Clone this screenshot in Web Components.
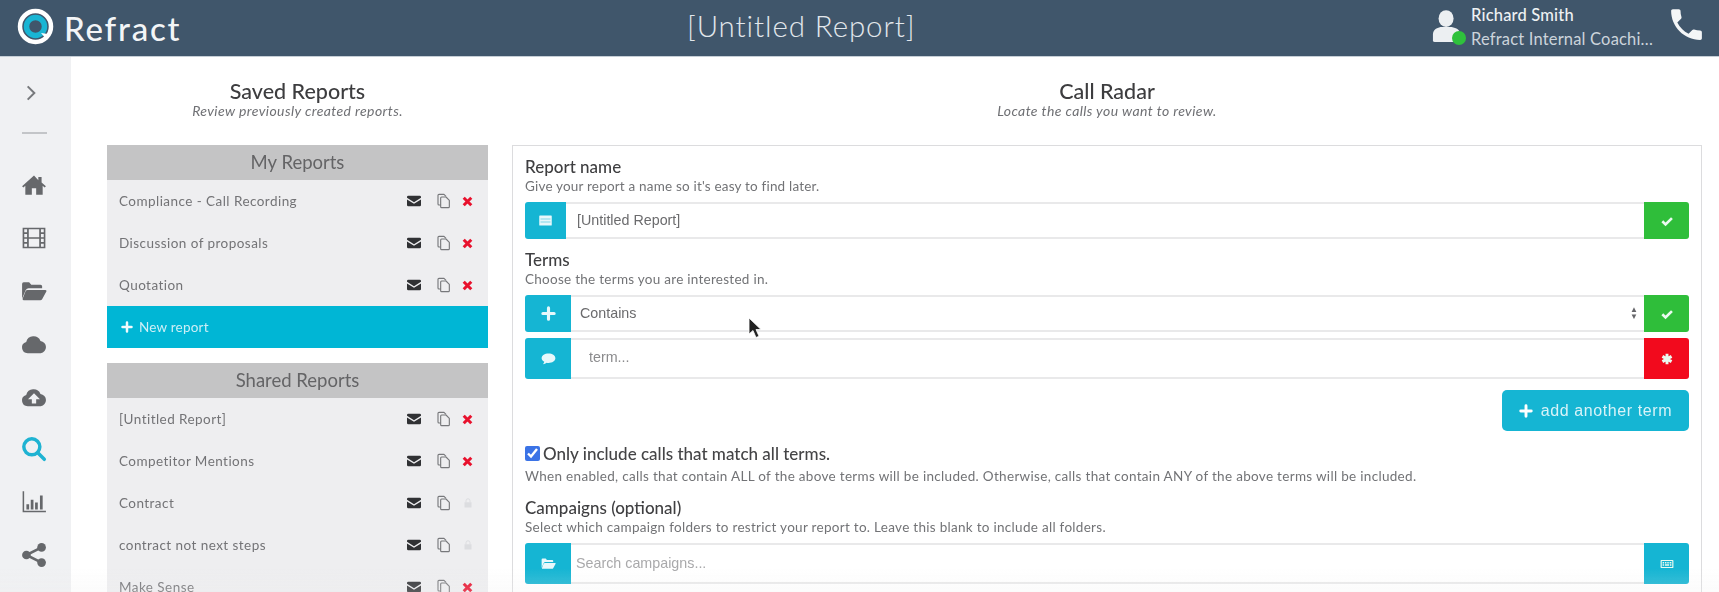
<!DOCTYPE html>
<html lang="en"><head><meta charset="utf-8"><title>Refract</title>
<style>
html,body{margin:0;height:592px;overflow:hidden;background:#fff}
body{font-family:Lato,"Open Sans",sans-serif;color:#444}
</style></head><body>
<refract-app></refract-app>
<script>
const ICONS={
home:'<path d="M12 3.2 1 13.2l1.2 1.2L4 12.8V21h6v-6h4v6h6v-8.2l1.8 1.6 1.2-1.2-4-3.6V4.5h-3v3z"/>',
film:'<path fill-rule="evenodd" d="M1.5 2.5h21v19h-21zM3 4v2.6h2.6V4zm0 4.2v3h2.6v-3zm0 4.6v3h2.6v-3zm0 4.6V20h2.6v-2.6zM7.2 4v7.2h9.6V4zm0 8.8V20h9.6v-7.2zM18.4 4v2.6H21V4zm0 4.2v3H21v-3zm0 4.6v3H21v-3zm0 4.6V20H21v-2.6z"/>',
folder:'<path d="M1 19V5.5A1.5 1.5 0 0 1 2.500 4h5l2 2.200H18A1.500 1.500 0 0 1 19.500 7.700V9.500H7a3 3 0 0 0-2.600 1.500z"/><path d="M6 11h16.500c.9 0 1.300.8.900 1.500L19.500 19.500a2 2 0 0 1-1.700 1H2.500c-.9 0-1.300-.8-.9-1.500L4.300 12a2 2 0 0 1 1.700-1z"/>',
cloud:'<path d="M6.300 20.500A5.300 5.300 0 0 1 4.800 10.100 7 7 0 0 1 18 9.200a5.700 5.700 0 0 1 .2 11.300z"/>',
upload:'<path fill-rule="evenodd" d="M6.300 20.500A5.300 5.300 0 0 1 4.800 10.100 7 7 0 0 1 18 9.200a5.700 5.700 0 0 1 .2 11.300zM12 8.500l-5.500 5.500h3.500v4h4v-4h3.500z"/>',
search:'<g fill="none" stroke="currentColor" stroke-width="3.200" stroke-linecap="round"><circle cx="10" cy="10" r="7.400"/><path d="M15.500 15.500l6 6"/></g>',
bars:'<path d="M1.500 2h1.400v18H23v1.500H1.500z"/><path d="M5 14h2.500v5H5zM9 10h2.500v9H9zM13 12.500h2.500V19H13zM17.500 6H20v13h-2.500z"/>',
share:'<g fill="currentColor"><circle cx="19" cy="5" r="4"/><circle cx="5" cy="12" r="4"/><circle cx="19" cy="19" r="4"/></g><path d="M19 5 5 12l14 7" fill="none" stroke="currentColor" stroke-width="2.400"/>',
mail:'<path d="M3.500 4h17A2 2 0 0 1 22.500 6v1.200L12 13.800 1.500 7.200V6a2 2 0 0 1 2-2z"/><path d="M1.500 9.600 12 16.200 22.500 9.600V18a2 2 0 0 1-2 2h-17a2 2 0 0 1-2-2z"/>',
copy:'<g fill="none" stroke="currentColor" stroke-width="1.700" stroke-linejoin="round"><path d="M7 18H4.500A1.500 1.500 0 0 1 3 16.500V3.500A1.500 1.500 0 0 1 4.500 2H12l3 3"/><path d="M8.500 6H15l5 5v9.500a1.500 1.500 0 0 1-1.500 1.500h-10A1.500 1.500 0 0 1 7 20.500v-13A1.500 1.500 0 0 1 8.500 6z"/></g>',
times:'<path d="M5 5l14 14M19 5 5 19" fill="none" stroke="currentColor" stroke-width="5.500"/>',
plus:'<path d="M12 3v18M3 12h18" fill="none" stroke="currentColor" stroke-width="5" stroke-linecap="round"/>',
check:'<path d="M4 12.500l5.500 5.500L20.500 7" fill="none" stroke="currentColor" stroke-width="4.500"/>',
comment:'<path d="M12 4c6 0 11 3.300 11 7.500S18 19 12 19c-1 0-2-.1-3-.3C7.500 20 5.500 21 3 21c1.200-1.200 2-2.500 2.200-4C2.700 15.600 1 13.700 1 11.500 1 7.300 6 4 12 4z"/>',
star:'<path d="M12 3v18M4.200 7.500l15.600 9M19.800 7.500l-15.600 9" fill="none" stroke="currentColor" stroke-width="5"/>',
keys:'<path fill-rule="evenodd" d="M2.500 5h19A1.500 1.500 0 0 1 23 6.500v11a1.500 1.500 0 0 1-1.500 1.500h-19A1.500 1.500 0 0 1 1 17.500v-11A1.500 1.500 0 0 1 2.500 5zM3 7v10h18V7zm1.500 1.500h2.500v2.500H4.500zm4 0H11v2.500H8.500zm4 0H15v2.500h-2.500zm4 0h3v2.500h-3zm-12 4h2.500V15H4.500zm4 0h7V15h-7zm8.500 0h2.500V15H17z"/>',
phone:'<path d="M6.620 10.790c1.440 2.830 3.760 5.140 6.590 6.590l2.200-2.200c.27-.27.67-.36 1.020-.24 1.120.37 2.330.57 3.570.57.55 0 1 .45 1 1V20c0 .55-.45 1-1 1-9.390 0-17-7.610-17-17 0-.55.45-1 1-1h3.500c.55 0 1 .45 1 1 0 1.250.2 2.450.57 3.570.11.35.03.74-.25 1.020z"/>',
lock:'<path d="M5 10.500h14V21H5z"/><path d="M8 10.500V7.500a4 4 0 0 1 8 0v3" fill="none" stroke="currentColor" stroke-width="2"/>',
list:'<path fill-rule="evenodd" d="M3 4h18a1 1 0 0 1 1 1v14a1 1 0 0 1-1 1H3a1 1 0 0 1-1-1V5a1 1 0 0 1 1-1zm1 5v.8h16V9zm0 5v.8h16V14z"/>',
chevron:'<path d="M7 2l10 10L7 22" fill="none" stroke="currentColor" stroke-width="3"/>'
};
function def(name,css,html,init){
  customElements.define(name,class extends HTMLElement{
    connectedCallback(){
      if(this.shadowRoot)return;
      const r=this.attachShadow({mode:'open'});
      r.innerHTML='<style>'+css+'</style>'+(typeof html==='function'?html(this):html);
      if(init)init(this,r);
    }
  });
}
def('ui-icon',':host{display:inline-flex;width:var(--s,16px);height:var(--s,16px);flex:none}svg{width:100%;height:100%;display:block;fill:currentColor}',
  h=>`<svg viewBox="0 0 24 24" aria-hidden="true">${ICONS[h.getAttribute('name')]||''}</svg>`);

def('app-header',`
:host{display:flex;align-items:center;background:#40566b;border-bottom:1px solid #c5ced6;box-sizing:border-box;height:57px;color:#fff;flex:none;padding:0 12px 0 17px}
.brand{flex:0 0 670px;display:flex;align-items:center;gap:10px;font-size:33px;font-weight:500;letter-spacing:1.800px;color:#f3f5f7}
.logo{width:37px;height:37px;margin-top:-3px;flex:none}
.title{flex:0 0 212px;white-space:nowrap;text-align:center;font-size:29.500px;font-weight:300;color:#e2e7ec;margin-top:-5px;letter-spacing:.9px}
.user{margin-left:auto;display:flex;align-items:center;gap:9px}
.av{position:relative;width:30px;height:38px;color:#eceff2;margin-top:-2px}
.av svg{width:30px;height:38px;display:block}
.dot{position:absolute;right:-4px;bottom:1px;width:14px;height:14px;border-radius:50%;background:#2fc13c}
.txt{width:195px;font-size:16.500px;line-height:24px;margin-top:-2px;white-space:nowrap;letter-spacing:.18px}
.txt b{display:block;font-weight:500;color:#eef1f3}
.txt span{display:block;color:#ccd4db}
ui-icon{--s:41px;color:#f4f6f7;margin-top:-8px}
`,`<div class="brand"><svg class="logo" viewBox="0 0 37 37"><circle cx="18.500" cy="18.500" r="15.500" fill="none" stroke="#fff" stroke-width="4.500"/><circle cx="18.500" cy="18.500" r="9" fill="none" stroke="#19b5d4" stroke-width="5.500"/><path d="M24 25l7 1-1 6z" fill="#fff"/></svg><span>Refract</span></div>
<div class="title">[Untitled Report]</div>
<div class="user"><div class="av"><svg viewBox="0 0 32 38"><ellipse cx="15" cy="10" rx="8" ry="9" fill="currentColor"/><path d="M1 33V27c0-5 4-7 8-8h12c5 1 9 3 9 8v6a2 2 0 0 1-2 2H3a2 2 0 0 1-2-2z" fill="currentColor"/></svg><i class="dot"></i></div>
<div class="txt"><b>Richard Smith</b><span>Refract Internal Coachi…</span></div></div><ui-icon name="phone"></ui-icon>`);

def('side-nav',`
:host{display:flex;flex-direction:column;align-items:center;flex:0 0 71px;background:#f0f1f3;padding-top:28px;box-sizing:border-box;color:#66686b}
.chev{--s:16px;margin-left:-9px;color:#77797c}
hr{border:0;width:25px;height:2px;background:#c3c5c8;margin:31px 0 39px -3px}
.items{display:flex;flex-direction:column;gap:26.900px;margin-left:-3px;margin-top:-1px}
ui-icon{--s:26px}
.on{color:#1fb3d2}
`,`<ui-icon class="chev" name="chevron"></ui-icon><hr><div class="items">
<ui-icon name="home"></ui-icon><ui-icon name="film"></ui-icon><ui-icon name="folder"></ui-icon><ui-icon name="cloud"></ui-icon><ui-icon name="upload"></ui-icon><ui-icon class="on" name="search"></ui-icon><ui-icon name="bars"></ui-icon><ui-icon name="share"></ui-icon></div>`);

def('section-head',`
:host{display:block;text-align:center;height:88px;padding-top:23px;box-sizing:border-box}
h2{margin:0;font-size:21.500px;line-height:22px;font-weight:500;color:#3d3d3f}
p{margin:1px 0 0;font-size:14px;line-height:16px;font-style:italic;color:#6f7074;letter-spacing:.4px}
`,h=>`<h2>${h.getAttribute('title')}</h2><p>${h.getAttribute('sub')}</p>`);

def('report-list',`
:host{display:block;background:#eeeef0}
header{height:35px;background:#c4c4c5;color:#646466;text-align:center;font-size:18.500px;line-height:35px}
`,h=>`<header>${h.getAttribute('title')}</header><slot></slot>`);

def('report-row',`
:host{display:flex;align-items:center;height:42px;padding:0 14px 0 12px;font-size:13.500px;color:#737376;box-sizing:border-box;letter-spacing:.45px}
span{flex:1;white-space:nowrap}
.a{display:flex;align-items:center}
.m{--s:16px;color:#303134}
.c{--s:16px;color:#77787b;margin-left:14px}
.x{--s:13px;color:#e8112d;margin-left:9px}
.l{--s:12px;color:#dcdde0;margin-left:10px}
`,h=>`<span>${h.getAttribute('label')}</span><div class="a"><ui-icon class="m" name="mail"></ui-icon><ui-icon class="c" name="copy"></ui-icon>${h.hasAttribute('locked')?'<ui-icon class="l" name="lock"></ui-icon>':'<ui-icon class="x" name="times"></ui-icon>'}</div>`);

def('new-report',`
:host{display:flex;align-items:center;gap:6px;height:42px;background:#00b6d5;color:#cdeff6;padding:0 14px;font-size:13.500px;box-sizing:border-box;margin-bottom:15px;letter-spacing:.2px}
ui-icon{--s:12px;color:#f2fbfd}
`,`<ui-icon name="plus"></ui-icon><slot></slot>`);

def('field-head',`
:host{display:block}
h3{margin:1px 0 -1px;font-size:17px;line-height:20px;font-weight:500;color:#3f3f41}
h3:empty{display:none}
p{margin:0 0 1px;font-size:13.500px;line-height:20px;color:#727376;white-space:nowrap;letter-spacing:var(--ls,.27px)}
`,h=>`<h3>${h.getAttribute('title')}</h3><p>${h.getAttribute('sub')}</p>`);

def('input-row',`
:host{display:flex;align-items:stretch;height:var(--h,37px);box-sizing:border-box;font-family:"Liberation Sans",sans-serif;font-size:14.300px;color:#6b6b6d}
.add{flex:0 0 var(--w,46px);background:#15b5d3;border-radius:3px 0 0 3px;display:flex;align-items:center;justify-content:center;color:#e7f8fb}
.add ui-icon{--s:15px}
.mid{flex:1;display:flex;align-items:center;border-top:2px solid #e9e9ea;border-bottom:2px solid #e9e9ea;padding:0 6px var(--up,2px) var(--pad,9px);justify-content:space-between}
.end{flex:0 0 45px;border-radius:0 3px 3px 0;display:flex;align-items:center;justify-content:center;color:#eafaf0;background:var(--end,#2fbe3a)}
.end ui-icon{--s:14px}
.sp{font-size:8px;line-height:7px;color:#66666a;display:flex;flex-direction:column;letter-spacing:0}
.sp i{font-style:normal}
`,h=>`<div class="add"><ui-icon name="${h.getAttribute('icon')}"></ui-icon></div><div class="mid"><span><slot></slot></span>${h.hasAttribute('select')?'<span class="sp"><i>▲</i><i>▼</i></span>':''}</div><div class="end"><ui-icon name="${h.getAttribute('end')}"></ui-icon></div>`);

def('add-button',`
:host{display:flex;align-items:center;justify-content:center;gap:8px;align-self:flex-end;width:187px;height:41px;border-radius:5px;background:#15b5d3;color:#d8f3f8;font-family:"Liberation Sans",sans-serif;font-size:16px;box-sizing:border-box;letter-spacing:.6px}
ui-icon{--s:14px;color:#fff}
`,`<ui-icon name="plus"></ui-icon><slot></slot>`);

def('check-line',`
:host{display:flex;align-items:center;gap:3px;height:20px;font-size:17px;font-weight:500;color:#444446}
input{width:15px;height:15px;margin:0;accent-color:#3b73e6}
`,`<input type="checkbox" checked aria-label="Only include calls that match all terms."><slot></slot>`);

def('radar-panel',`
:host{display:flex;flex-direction:column;border:1px solid #dcdcde;border-bottom:0;padding:10px 12px 0;height:448px;box-sizing:border-box}
`,`<slot></slot>`);

def('refract-app',`
:host{display:flex;flex-direction:column;height:592px;overflow:hidden;position:relative;filter:blur(.45px)}
.body{flex:1;display:flex;min-height:0}
.main{flex:1;display:grid;grid-template-columns:381px 1190px;column-gap:24px;padding-left:36px;overflow:hidden}
.fade{position:absolute;left:0;right:0;bottom:0;height:24px;background:linear-gradient(rgba(240,240,240,0),rgba(238,238,238,.22));pointer-events:none}
.cursor{position:absolute;left:748px;top:318px;width:14px;height:21px}
`,`<app-header></app-header><div class="body"><side-nav></side-nav><div class="main">
<div><section-head title="Saved Reports" sub="Review previously created reports."></section-head>
<report-list title="My Reports"><report-row label="Compliance - Call Recording"></report-row><report-row label="Discussion of proposals"></report-row><report-row label="Quotation"></report-row></report-list>
<new-report>New report</new-report>
<report-list title="Shared Reports"><report-row label="[Untitled Report]"></report-row><report-row label="Competitor Mentions"></report-row><report-row label="Contract" locked></report-row><report-row label="contract not next steps" locked></report-row><report-row label="Make Sense"></report-row></report-list></div>
<div><section-head title="Call Radar" sub="Locate the calls you want to review."></section-head>
<radar-panel>
<field-head style="margin-bottom:5px;--ls:.19px" title="Report name" sub="Give your report a name so it's easy to find later."></field-head>
<input-row icon="list" end="check" style="--w:41px;--pad:11px">[Untitled Report]</input-row>
<field-head style="margin:10px 0 5px" title="Terms" sub="Choose the terms you are interested in."></field-head>
<input-row icon="plus" end="check" select>Contains</input-row>
<input-row icon="comment" end="star" style="--h:41px;--end:#f20a1d;--pad:18px;--up:3px;margin-top:6px;color:#8b8b8d">term...</input-row>
<add-button style="margin-top:11px">add another term</add-button>
<check-line style="margin-top:12px">Only include calls that match all terms.</check-line>
<field-head style="margin-top:3px;--ls:.31px" title="" sub="When enabled, calls that contain ALL of the above terms will be included. Otherwise, calls that contain ANY of the above terms will be included."></field-head>
<field-head style="margin:10px 0 5px;--ls:.29px" title="Campaigns (optional)" sub="Select which campaign folders to restrict your report to. Leave this blank to include all folders."></field-head>
<input-row icon="folder" end="keys" style="--h:41px;--end:#15b5d3;--pad:5px;color:#a9a9ab">Search campaigns...</input-row>
</radar-panel></div>
</div></div>
<div class="fade"></div>
<svg class="cursor" viewBox="0 0 14 21"><path d="M1 0v16l4-3.500 3 7 3-1.300-3-6.700h5z" fill="#222" stroke="#fff" stroke-width=".8"/></svg>`);
</script></body></html>
